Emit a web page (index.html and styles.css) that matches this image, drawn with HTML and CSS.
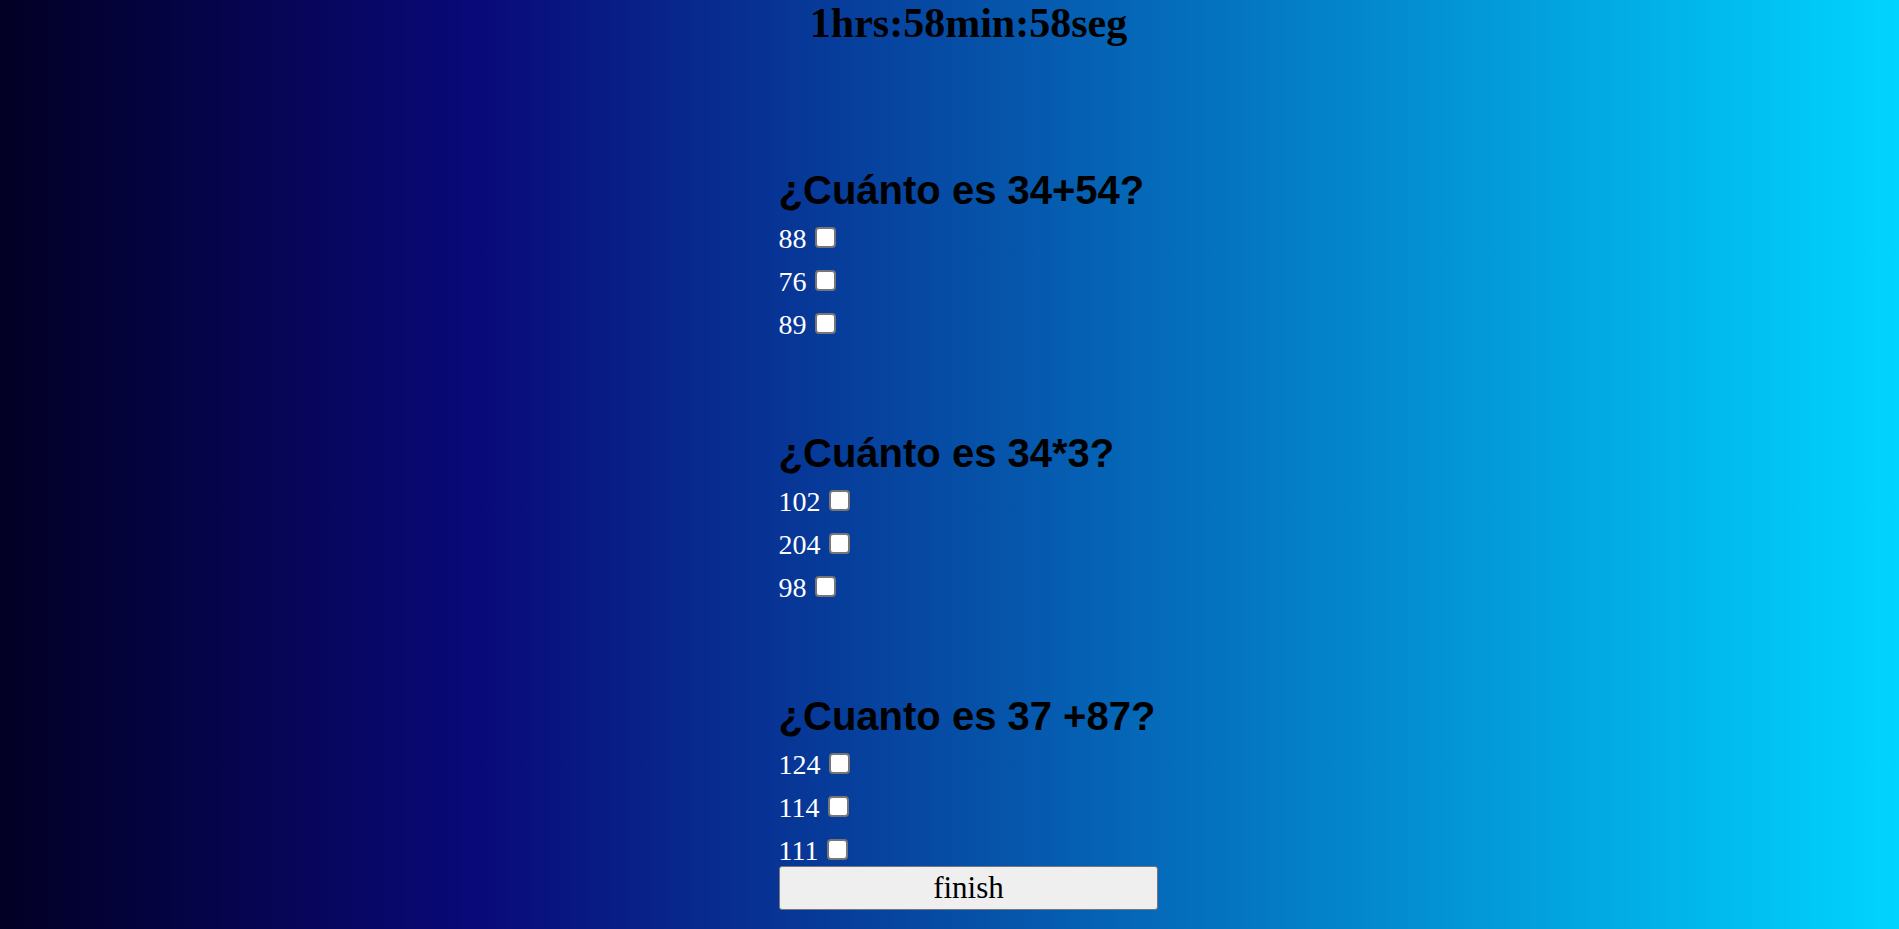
FILE: index.html
```html
<!DOCTYPE html>
<html lang="es">
<head>
<meta charset="utf-8">
<title>Quiz</title>
<link rel="stylesheet" href="styles.css">
</head>
<body>
<main class="quiz">
  <h1 class="timer">1hrs:58min:58seg</h1>
  <section class="question">
    <h2 class="question-title">¿Cuánto es 34+54?</h2>
    <label class="option">88 <input type="checkbox" class="check"></label>
    <label class="option">76 <input type="checkbox" class="check"></label>
    <label class="option">89 <input type="checkbox" class="check"></label>
  </section>
  <section class="question">
    <h2 class="question-title">¿Cuánto es 34*3?</h2>
    <label class="option">102 <input type="checkbox" class="check"></label>
    <label class="option">204 <input type="checkbox" class="check"></label>
    <label class="option">98 <input type="checkbox" class="check"></label>
  </section>
  <section class="question">
    <h2 class="question-title">¿Cuanto es 37 +87?</h2>
    <label class="option">124 <input type="checkbox" class="check"></label>
    <label class="option">114 <input type="checkbox" class="check"></label>
    <label class="option">111 <input type="checkbox" class="check"></label>
  </section>
  <button class="finish" type="button">finish</button>
</main>
</body>
</html>
```
FILE: styles.css
```css
html, body {
  margin: 0;
  padding: 0;
  height: 100%;
}
body {
  background: linear-gradient(90deg, #020024 0%, #090979 25%, #00d4ff 100%);
  font-family: "Liberation Serif", "Times New Roman", serif;
  overflow: hidden;
}
.quiz {
  margin-left: 41%;
  width: 20%;
  display: flex;
  flex-direction: column;
}
.timer {
  margin: -1px 0 121px 0;
  font-family: "Liberation Serif", "Times New Roman", serif;
  font-weight: bold;
  font-size: 42px;
  line-height: normal;
  text-align: center;
  color: #000;
  white-space: nowrap;
}
.question {
  display: flex;
  flex-direction: column;
  gap: 11px;
  margin-bottom: 90px;
}
.question:last-of-type {
  margin-bottom: -1px;
}
.question-title {
  margin: 0 0 -1px 0;
  font-family: "Liberation Sans", Arial, sans-serif;
  font-weight: bold;
  font-size: 40px;
  line-height: normal;
  color: #000;
  white-space: nowrap;
}
.option {
  font-size: 28px;
  line-height: normal;
  color: #fff;
}
.check {
  appearance: none;
  -webkit-appearance: none;
  box-sizing: border-box;
  width: 21px;
  height: 21px;
  margin: 0 0 0 1px;
  vertical-align: baseline;
  background: #fff;
  border: 2px solid #767676;
  border-radius: 4px;
}
.finish {
  height: 44px;
  width: 100%;
  background: #efefef;
  border: 1px solid #767676;
  border-radius: 3px;
  font-family: "Liberation Serif", "Times New Roman", serif;
  font-size: 31px;
  color: #000;
  padding: 0;
}
```
